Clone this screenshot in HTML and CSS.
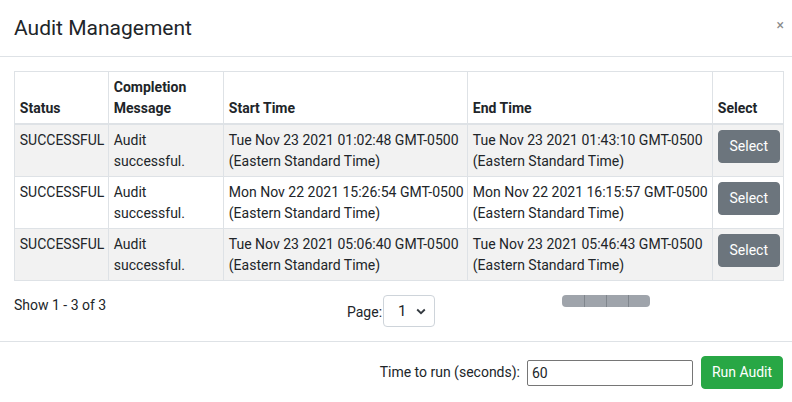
FILE: index.html
```html
<!DOCTYPE html>
<html>
<head>
<meta charset="utf-8">
<link rel="stylesheet" href="styles.css">
</head>
<body>
<div class="modal">
  <div class="modal-header">
    <h5 class="modal-title">Audit Management</h5>
    <span class="close">×</span>
  </div>
  <div class="modal-body">
    <table class="grid">
      <colgroup>
        <col class="c-status"><col class="c-msg"><col class="c-start"><col class="c-end"><col class="c-sel">
      </colgroup>
      <thead>
        <tr><th>Status</th><th>Completion Message</th><th>Start Time</th><th>End Time</th><th>Select</th></tr>
      </thead>
      <tbody>
        <tr class="odd">
          <td>SUCCESSFUL</td><td>Audit successful.</td>
          <td><span class="nw">Tue Nov 23 2021 01:02:48 GMT-0500</span> (Eastern Standard Time)</td>
          <td><span class="nw">Tue Nov 23 2021 01:43:10 GMT-0500</span> (Eastern Standard Time)</td>
          <td><button class="btn btn-secondary">Select</button></td>
        </tr>
        <tr>
          <td>SUCCESSFUL</td><td>Audit successful.</td>
          <td><span class="nw">Mon Nov 22 2021 15:26:54 GMT-0500</span> (Eastern Standard Time)</td>
          <td><span class="nw">Mon Nov 22 2021 16:15:57 GMT-0500</span> (Eastern Standard Time)</td>
          <td><button class="btn btn-secondary">Select</button></td>
        </tr>
        <tr class="odd">
          <td>SUCCESSFUL</td><td>Audit successful.</td>
          <td><span class="nw">Tue Nov 23 2021 05:06:40 GMT-0500</span> (Eastern Standard Time)</td>
          <td><span class="nw">Tue Nov 23 2021 05:46:43 GMT-0500</span> (Eastern Standard Time)</td>
          <td><button class="btn btn-secondary">Select</button></td>
        </tr>
      </tbody>
    </table>
    <div class="pager">
      <div class="pager-info">Show 1 - 3 of 3</div>
      <div class="pager-page">
        <span class="page-label">Page:</span>
        <div class="page-select">
          <span>1</span>
          <svg width="10" height="7" viewBox="0 0 10 7"><path d="M1.2 1.5 L5 5.2 L8.8 1.5" fill="none" stroke="#343a40" stroke-width="1.8"/></svg>
        </div>
      </div>
      <div class="pager-nav">
        <span></span><span></span><span></span><span></span>
      </div>
    </div>
  </div>
  <div class="modal-footer">
    <label class="run-label">Time to run (seconds):</label>
    <input class="run-input" type="text" value="60">
    <button class="btn btn-success">Run Audit</button>
  </div>
</div>
</body>
</html>
```
FILE: styles.css
```css
* { box-sizing: border-box; }
html, body { margin: 0; padding: 0; background: #fff; }
body {
  font-family: Roboto, "Liberation Sans", sans-serif;
  font-size: 14px;
  line-height: 1.5;
  color: #212529;
}
.modal { width: 792px; }
.modal-header {
  display: flex;
  align-items: flex-start;
  justify-content: space-between;
  padding: 13px 8px 13px 14px;
  border-bottom: 1px solid #dee2e6;
}
.modal-title {
  margin: 0;
  font-size: 21px;
  font-weight: 400;
  line-height: 30px;
}
.close {
  font-size: 14px;
  line-height: 24px;
  color: #8a8a8a;
}
.modal-body { padding: 14px 9px 14px 14px; }
.grid {
  width: 769px;
  border-collapse: collapse;
  table-layout: fixed;
}
.c-status { width: 94px; }
.c-msg { width: 115px; }
.c-start { width: 244px; }
.c-end { width: 245px; }
.c-sel { width: 71px; }
.grid th, .grid td {
  border: 1px solid #dee2e6;
  padding: 4.5px 4.5px 4.5px 4.8px;
  text-align: left;
  vertical-align: top;
  line-height: 21px;
}
.grid th {
  vertical-align: bottom;
  font-weight: 700;
  border-bottom: 2px solid #dee2e6;
}
.grid tr.odd td { background: #f2f2f2; }
.nw { white-space: nowrap; }
.btn {
  font-family: Roboto, "Liberation Sans", sans-serif;
  font-size: 14px;
  line-height: 21px;
  border: 1px solid transparent;
  border-radius: 4px;
  color: #fff;
  cursor: pointer;
}
.btn-secondary { background: #6c757d; border-color: #6c757d; width: 62px; height: 33px; padding: 5px 0; }
.btn-success { background: #28a745; border-color: #28a745; width: 82px; height: 33px; padding: 5px 0; }
.pager {
  display: flex;
  align-items: flex-start;
  margin-top: 14px;
  height: 32px;
}
.pager-info { width: 333px; line-height: 21px; }
.pager-page {
  display: flex;
  align-items: center;
  width: 215px;
}
.page-label { line-height: 21px; padding-top: 2px; }
.page-select {
  width: 52px;
  height: 32px;
  border: 1px solid #ced4da;
  border-radius: 4px;
  display: flex;
  align-items: center;
  justify-content: space-between;
  padding: 0 8px 0 14px;
  font-size: 15px;
  margin-left: 1px;
}
.page-select svg { display: block; margin-top: 1px; }
.pager-nav {
  display: flex;
  height: 12px;
  border-radius: 4px;
  overflow: hidden;
  background: #9fa4ab;
}
.pager-nav span {
  width: 22px;
  height: 12px;
  border-left: 1px solid #80868d;
}
.pager-nav span:first-child { border-left: 0; }
.modal-footer {
  display: flex;
  justify-content: flex-end;
  align-items: center;
  padding: 14px 9px 13px 14px;
  border-top: 1px solid #dee2e6;
}
.run-label { margin-right: 7px; }
.run-input {
  width: 166px;
  height: 26px;
  border: 1px solid #767676;
  border-radius: 2px;
  padding: 1px 4px;
  font-family: Roboto, "Liberation Sans", sans-serif;
  font-size: 14px;
  color: #212529;
  margin-right: 8px;
}
```
